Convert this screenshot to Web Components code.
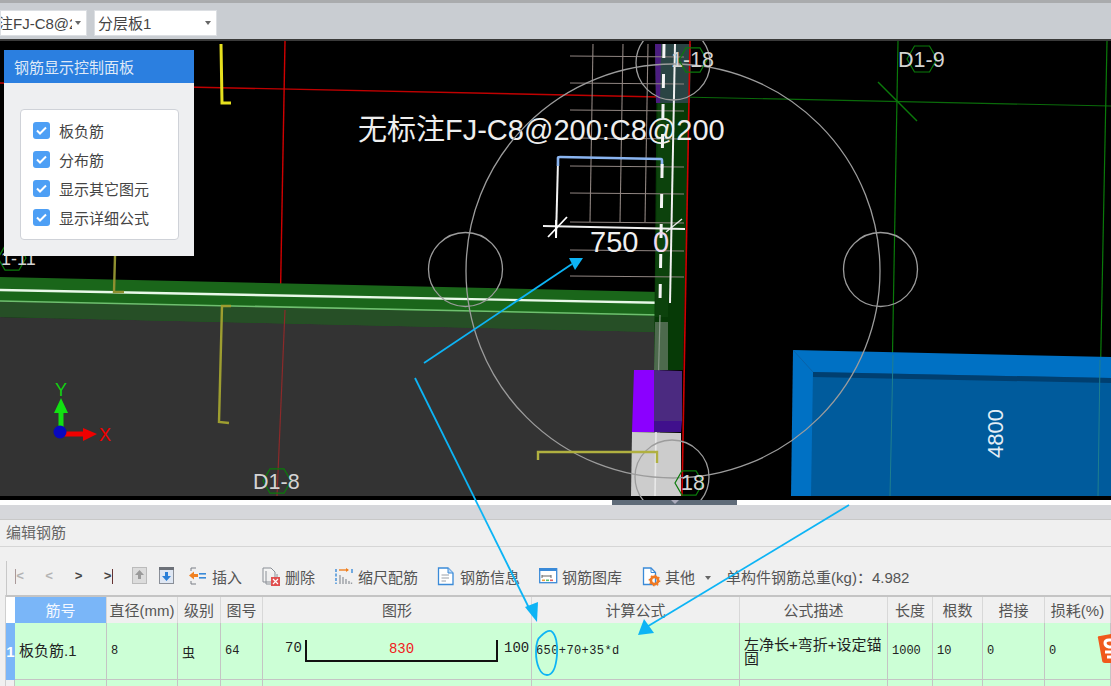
<!DOCTYPE html>
<html lang="zh">
<head>
<meta charset="utf-8">
<title>编辑钢筋</title>
<style>
  html, body { margin: 0; padding: 0; background: #f0f0f0; }
  body { font: 15px "Liberation Sans", "Noto Sans CJK SC", sans-serif; overflow: hidden; }
</style>
</head>
<body>
<cad-app></cad-app>

<script>
const CJK = '"Liberation Sans", "Noto Sans CJK SC", sans-serif';

class ComboBox extends HTMLElement {
    connectedCallback() {
        this.attachShadow({ mode: 'open' });
        this.shadowRoot.innerHTML = `
            <style>
                :host {
                    display: flex;
                    align-items: center;
                    height: 24px;
                    background: white;
                    border: 1px solid #dcdfe3;
                    color: #444;
                    font-size: 15px;
                    box-sizing: content-box;
                    overflow: hidden;
                }
                .label { flex: 1; overflow: hidden; white-space: nowrap; }
                .arrow {
                    width: 0; height: 0; flex: none;
                    border-left: 3.5px solid transparent;
                    border-right: 3.5px solid transparent;
                    border-top: 4px solid #666;
                    margin: 0 5px 0 3px;
                }
            </style>
            <div class="label"><slot></slot></div>
            <div class="arrow"></div>
        `;
    }
}
customElements.define('combo-box', ComboBox);

class TopBar extends HTMLElement {
    connectedCallback() {
        this.attachShadow({ mode: 'open' });
        this.shadowRoot.innerHTML = `
            <style>
                :host {
                    display: flex;
                    align-items: center;
                    gap: 7px;
                    height: 41px;
                    box-sizing: border-box;
                    flex: none;
                    background: #c9cdd2;
                    border-top: 3px solid #a9abad;
                    border-bottom: 2px solid #3a3a3a;
                    padding: 3px 0 0;
                }
                .first { width: 85px; }
                .first span { margin-left: -3px; }
                .second { width: 123px; padding-left: 3px; box-sizing: border-box; height: 26px; }
            </style>
            <combo-box class="first"><span>注FJ-C8@200</span></combo-box>
            <combo-box class="second">分层板1</combo-box>
        `;
    }
}
customElements.define('top-bar', TopBar);

class CheckItem extends HTMLElement {
    connectedCallback() {
        this.attachShadow({ mode: 'open' });
        this.shadowRoot.innerHTML = `
            <style>
                :host {
                    display: flex;
                    align-items: center;
                    gap: 9px;
                    height: 29px;
                    color: #444;
                    font-size: 15px;
                }
                .box {
                    width: 17px; height: 17px;
                    border-radius: 3px;
                    background: #4d9ff5;
                    display: flex; align-items: center; justify-content: center;
                }
            </style>
            <div class="box">
                <svg width="11" height="9" viewBox="0 0 11 9"><path d="M1 4.5 L4 7.5 L10 1.5" fill="none" stroke="#fff" stroke-width="2"/></svg>
            </div>
            <span><slot></slot></span>
        `;
    }
}
customElements.define('check-item', CheckItem);

class RebarPanel extends HTMLElement {
    connectedCallback() {
        this.attachShadow({ mode: 'open' });
        this.shadowRoot.innerHTML = `
            <style>
                :host {
                    position: absolute;
                    left: 4px;
                    top: 9px;
                    width: 190px;
                    height: 206px;
                    display: flex;
                    flex-direction: column;
                    background: #eeeff1;
                }
                .head {
                    height: 33px;
                    flex: none;
                    background: #2b7fe0;
                    color: #dfe9f7;
                    font-size: 15px;
                    display: flex;
                    align-items: center;
                    padding-left: 10px;
                }
                .group {
                    margin: 26px 15px 0 16px;
                    height: 131px;
                    box-sizing: border-box;
                    background: white;
                    border: 1px solid #cfd2d8;
                    border-radius: 4px;
                    padding: 6px 0 0 12px;
                }
            </style>
            <div class="head">钢筋显示控制面板</div>
            <div class="group"><slot></slot></div>
        `;
    }
}
customElements.define('rebar-panel', RebarPanel);

class CadView extends HTMLElement {
    connectedCallback() {
        this.attachShadow({ mode: 'open' });
        const hex = (cx, cy, r) => {
            const pts = [];
            for (let i = 0; i < 6; i++) {
                const a = Math.PI / 3 * i;
                pts.push((cx + r * Math.cos(a)).toFixed(1) + ',' + (cy + r * Math.sin(a)).toFixed(1));
            }
            return `<polygon points="${pts.join(' ')}" fill="none" stroke="#0b7a0b" stroke-width="1.2"/>`;
        };
        const grid = [56, 83, 110, 138, 166, 193, 222, 250, 276].map(y =>
            `<line x1="570" y1="${y}" x2="684" y2="${y + 1}"/>`).join('');
        this.shadowRoot.innerHTML = `
            <style>
                :host {
                    display: block;
                    position: relative;
                    flex: none;
                    height: 459px;
                    background: #000;
                    overflow: hidden;
                }
                svg { display: block; font-family: ${CJK}; }
            </style>
            <svg width="1111" height="459" viewBox="0 41 1111 459">
                <rect x="0" y="41" width="1111" height="459" fill="#000"/>

                <!-- red and green axis lines -->
                <line x1="0" y1="83" x2="660" y2="97" stroke="#c00000" stroke-width="1.4"/>
                <line x1="285" y1="41" x2="280" y2="320" stroke="#d00000" stroke-width="1.4"/>
                <line x1="680" y1="97" x2="1111" y2="106" stroke="#0a6a0a" stroke-width="1.2"/>
                <line x1="898" y1="41" x2="890" y2="496" stroke="#0a7a0a" stroke-width="1.2"/>
                <line x1="1107" y1="41" x2="1098" y2="496" stroke="#0a7a0a" stroke-width="1.2"/>
                <line x1="878" y1="82" x2="917" y2="121" stroke="#0a7a0a" stroke-width="1.4"/>

                <!-- beam and slab -->
                <polygon points="0,317 660,330 660,496 0,496" fill="#333333"/>
                <polygon points="0,277 660,292 660,332 0,317" fill="#1a661a"/>
                <polygon points="0,301 660,316 660,332 0,317" fill="#264f26"/>
                <line x1="0" y1="290" x2="670" y2="303" stroke="#e8f8e8" stroke-width="2.4"/>
                <line x1="0" y1="301" x2="660" y2="315" stroke="#6fbf6f" stroke-width="1.6"/>
                <polygon points="657,44 691,44 683,370 654,370" fill="#063a06"/>
                <polygon points="658,103 672,103 668,317 655,317" fill="#0c420c"/>
                <polygon points="655,44 691,44 690,103 656,103" fill="#2a4444"/>
                <polygon points="655,44 661,44 660,103 656,103" fill="#4c1d80"/>
                <polygon points="655,322 668,322 668,370 654,370" fill="#4d6a4d"/>
                <line x1="660" y1="315" x2="657" y2="432" stroke="#8a9a8a" stroke-width="1.2"/>
                <line x1="285" y1="310" x2="277" y2="496" stroke="#8c2a2a" stroke-width="1.2"/>
                <line x1="690" y1="41" x2="682" y2="496" stroke="#d00000" stroke-width="1.6"/>

                <!-- column -->
                <polygon points="634,370 654,370 654,432 632,432" fill="#8b00ff"/>
                <polygon points="654,370 682,371 682,421 654,421" fill="#4b2a80"/>
                <polygon points="654,421 682,421 681,432 654,432" fill="#40108c"/>
                <polygon points="632,432 681,433 681,496 631,496" fill="#cccccc"/>
                <line x1="656" y1="432" x2="655" y2="496" stroke="#e8e8e8" stroke-width="1.6"/>

                <!-- blue room -->
                <polygon points="793,350 1111,357 1111,496 791,496" fill="#0071c4"/>
                <polygon points="813,372 1111,378 1111,496 811,496" fill="#005b9c"/>
                <polygon points="813,372 1111,378 1111,383 813,377" fill="#003f70"/>
                <line x1="793" y1="350" x2="813" y2="372" stroke="#0a62a8" stroke-width="1"/>
                <line x1="893" y1="355" x2="890" y2="496" stroke="#1f7f8f" stroke-width="1"/>
                <line x1="1100" y1="360" x2="1098" y2="496" stroke="#1f7f8f" stroke-width="1"/>
                <text transform="translate(1003,458) rotate(-90)" font-size="22" fill="#e4eef6">4800</text>

                <!-- rebar grid -->
                <g stroke="#8f8480" stroke-width="1.1">${grid}
                    <line x1="593" y1="44" x2="590" y2="222"/>
                    <line x1="623" y1="44" x2="620" y2="222"/>
                    <line x1="648" y1="44" x2="645" y2="222"/>
                </g>

                <!-- section detail -->
                <path d="M558 161 L556 238" fill="none" stroke="#f4f4f4" stroke-width="2"/>
                <path d="M558 166 V158 Q558 157 560 157 L661 159 Q662 159 662 161 V168" fill="none" stroke="#8ab4f0" stroke-width="2.6"/>
                <line x1="543" y1="226" x2="685" y2="229" stroke="#f0f0f0" stroke-width="1.8"/>
                <line x1="548" y1="237" x2="567" y2="217" stroke="#fff" stroke-width="1.8"/>
                <line x1="556" y1="220" x2="556" y2="238" stroke="#fff" stroke-width="1.8"/>
                <line x1="666" y1="232" x2="682" y2="219" stroke="#e8e8e8" stroke-width="1.4"/>
                <line x1="675" y1="44" x2="670" y2="303" stroke="#f0f0f0" stroke-width="2"/>
                <line x1="664" y1="44" x2="660" y2="303" stroke="#f4f4f4" stroke-width="3" stroke-dasharray="14 16"/>
                <text x="358" y="140" font-size="29" fill="#eeeeee">无标注FJ-C8@200:C8@200</text>
                <text x="590" y="252" font-size="29" fill="#f0f0f0">750</text>
                <text x="653" y="252" font-size="29" fill="#f0d8f0">0</text>

                <!-- lens circles -->
                <g fill="none" stroke="#9c9c9c" stroke-width="1.3">
                    <circle cx="673" cy="271" r="207"/>
                    <circle cx="465.5" cy="269.5" r="37"/>
                    <circle cx="880.5" cy="269.5" r="37"/>
                    <circle cx="673" cy="63" r="37"/>
                    <circle cx="672" cy="477" r="37"/>
                </g>

                <!-- bent bars -->
                <path d="M221 44 L222 103 H231" fill="none" stroke="#e6e01e" stroke-width="3"/>
                <path d="M115 256 L114 292 H124" fill="none" stroke="#8f9030" stroke-width="2.4"/>
                <path d="M231 306 H222 L219 422 L229 423" fill="none" stroke="#9e9e30" stroke-width="2.4"/>
                <path d="M538 460 V452 H657 V463" fill="none" stroke="#b0b040" stroke-width="2.4"/>

                <!-- grid labels -->
                ${hex(922, 59, 15)}${hex(693, 60, 14)}${hex(277, 481, 14)}${hex(689, 483, 14)}${hex(12, 258, 14)}
                <g fill="#d4d4d4" font-size="21.5">
                    <text x="898" y="67">D1-9</text>
                    <text x="671" y="67">1-18</text>
                    <text x="253" y="489">D1-8</text>
                    <text x="681" y="490">18</text>
                    <text x="1" y="265" font-size="18">1-11</text>
                </g>

                <!-- axis gizmo -->
                <line x1="61" y1="428" x2="61" y2="410" stroke="#12e012" stroke-width="5"/>
                <polygon points="61,398 68,413 54,413" fill="#12e012"/>
                <line x1="64" y1="434" x2="85" y2="434" stroke="#f00000" stroke-width="5"/>
                <polygon points="97,434 83,428 83,441" fill="#f00000"/>
                <circle cx="60" cy="432" r="6.5" fill="#0808c0"/>
                <text x="55" y="396" font-size="18" fill="#12d012">Y</text>
                <text x="99" y="441" font-size="18" fill="#f00000">X</text>
            </svg>
            <slot></slot>
        `;
    }
}
customElements.define('cad-view', CadView);

const ICONS = {
    up: `<rect x="0.5" y="0.5" width="14" height="16" fill="#dcdcdc" stroke="#bbb"/><path d="M7.5 3 L3 8 H6 V12 H9 V8 H12 Z" fill="#9a9a9a"/>`,
    down: `<rect x="0.5" y="0.5" width="14" height="16" fill="#dfe7f3" stroke="#8a8f98"/><rect x="0" y="0" width="15" height="3" fill="#6c7078"/><path d="M7.5 14 L3 9 H6 V5 H9 V9 H12 Z" fill="#2a7fd8"/>`,
    insert: `<path d="M2 1 H7 M2 1 V4 M2 14 V17 H7" fill="none" stroke="#7a7f86"/><path d="M0 8.5 L5 4.5 V7 H9 V10 H5 V12.5 Z" fill="#f08020"/><rect x="10" y="6" width="7" height="1.6" fill="#3a8ad8"/><rect x="10" y="10" width="7" height="1.6" fill="#3a8ad8"/>`,
    del: `<path d="M1 1 H9 L13 5 V15 H1 Z M4 4 V17 H15 V7" fill="#f4f4f4" stroke="#8a8f96"/><rect x="9" y="10" width="9" height="9" fill="#e05050"/><path d="M11 12 L16 17 M16 12 L11 17" stroke="#fff" stroke-width="1.2"/>`,
    shrink: `<path d="M1 2 V17" stroke="#3a8ad8" stroke-width="1.4" stroke-dasharray="3 1.5"/><path d="M4 3 H13" stroke="#f08020" stroke-width="1.4"/><path d="M11 1 L14 3 L11 5" fill="#f08020"/><path d="M17 2 V6" stroke="#3a8ad8" stroke-width="1.4"/><path d="M5 17 V8 M8 17 V10 M11 17 V12 M14 17 V14 M16.5 17 V15.5" stroke="#9a9ea4" stroke-width="1.4"/>`,
    info: `<path d="M1.5 1 H11 L16 6 V17.5 H1.5 Z" fill="#fff" stroke="#3a8ad8" stroke-width="1.3"/><path d="M11 1 V6 H16" fill="#bcd8f4" stroke="#3a8ad8"/><path d="M4.5 8 H12 M4.5 11 H12 M4.5 14 H9" stroke="#9aa0a8"/>`,
    lib: `<rect x="0.7" y="1.7" width="17" height="14" fill="#fff" stroke="#3a8ad8" stroke-width="1.3"/><rect x="0" y="1" width="18" height="3" fill="#3a8ad8"/><path d="M3 8 V11 M3 9 H12 M12 8 V11" stroke="#666" fill="none"/><rect x="3" y="12.5" width="3" height="1.6" fill="#f0a040"/><rect x="7" y="12.5" width="3" height="1.6" fill="#60c070"/><rect x="11" y="12.5" width="3" height="1.6" fill="#e06060"/>`,
    other: `<path d="M1.5 1 H9 L13.5 5.5 V17.5 H1.5 Z" fill="#fff" stroke="#3a8ad8" stroke-width="1.3"/><path d="M9 1 V5.5 H13.5" fill="none" stroke="#3a8ad8"/><circle cx="12.5" cy="13.5" r="3.6" fill="none" stroke="#f07820" stroke-width="2.6"/><circle cx="12.5" cy="13.5" r="5.2" fill="none" stroke="#f07820" stroke-width="1.4" stroke-dasharray="1.6 2.4"/>`
};

class ToolBtn extends HTMLElement {
    connectedCallback() {
        this.attachShadow({ mode: 'open' });
        const icon = ICONS[this.getAttribute('icon')];
        this.shadowRoot.innerHTML = `
            <style>
                :host {
                    display: inline-flex;
                    align-items: center;
                    gap: 5px;
                    color: #555;
                    font-size: 15px;
                    white-space: nowrap;
                }
                svg { display: block; flex: none; overflow: visible; }
            </style>
            <svg width="${this.getAttribute('w') || 18}" height="19" viewBox="0 0 ${this.getAttribute('w') || 18} 19">${icon}</svg>
            <slot></slot>
        `;
    }
}
customElements.define('tool-btn', ToolBtn);

class EditBar extends HTMLElement {
    connectedCallback() {
        this.attachShadow({ mode: 'open' });
        this.shadowRoot.innerHTML = `
            <style>
                :host {
                    display: flex;
                    align-items: center;
                    height: 48px;
                    box-sizing: border-box;
                    padding: 11px 0 0 0;
                    margin-left: 6px;
                    flex: none;
                    background: linear-gradient(#c8c8c8, #c8c8c8) 0 14px / 1px 100% no-repeat #f0f0f0;
                    color: #555;
                }
                .nav { display: flex; font: bold 13px "Liberation Mono", monospace; width: 118px; margin-left: -1px; }
                .nav span { width: 30px; text-align: center; color: #444; }
                .nav span.off { color: #b4b4b4; }
                .nav b { font-weight: inherit; border-left: 1px solid #a99; }
                .nav b.end { border-left: 0; border-right: 1px solid #633; }
                .caret {
                    width: 0; height: 0;
                    border-left: 3.5px solid transparent;
                    border-right: 3.5px solid transparent;
                    border-top: 4px solid #666;
                    margin: 2px 15px 0 10px;
                }
                .total { font-size: 15px; color: #555; white-space: nowrap; }
            </style>
            <div class="nav">
                <span class="off"><b>&lt;</b></span><span class="off">&lt;</span><span>&gt;</span><span><b class="end">&gt;</b></span>
            </div>
            <tool-btn icon="up" w="15" style="margin-left:9px"></tool-btn>
            <tool-btn icon="down" w="15" style="margin-left:12px"></tool-btn>
            <tool-btn icon="insert" style="margin-left:15px">插入</tool-btn>
            <tool-btn icon="del" style="margin-left:20px">删除</tool-btn>
            <tool-btn icon="shrink" style="margin-left:20px">缩尺配筋</tool-btn>
            <tool-btn icon="info" style="margin-left:19px">钢筋信息</tool-btn>
            <tool-btn icon="lib" style="margin-left:19px">钢筋图库</tool-btn>
            <tool-btn icon="other" style="margin-left:20px">其他</tool-btn>
            <div class="caret"></div>
            <div class="total">单构件钢筋总重(kg)：4.982</div>
        `;
    }
}
customElements.define('edit-bar', EditBar);

class RebarTable extends HTMLElement {
    connectedCallback() {
        this.attachShadow({ mode: 'open' });
        const heads = ['筋号', '直径(mm)', '级别', '图号', '图形', '计算公式', '公式描述', '长度', '根数', '搭接', '损耗(%)'];
        this.shadowRoot.innerHTML = `
            <style>
                :host {
                    display: grid;
                    grid-template-columns: 9px 92px 71px 43px 42px 269px 208px 148px 45px 50px 62px 66px;
                    grid-template-rows: 26px 57px 20px;
                    margin-left: 6px;
                    flex: 1;
                    position: relative;
                    border-top: 2px solid #c4c4c4;
                    box-shadow: -1px 0 #cfcfcf;
                    background: #f0f0f0;
                    color: #222;
                    overflow: hidden;
                }
                .h {
                    display: flex; align-items: center; justify-content: center;
                    background: #f0f0f0; color: #555; font-size: 15px;
                    border-right: 1px solid #d8d8d8; box-sizing: border-box;
                    white-space: nowrap; overflow: hidden;
                    padding-bottom: 2px;
                }
                .h.sel { background: #7ab6f8; color: #f4f8ff; }
                .corner { background: white; }
                .n {
                    background: #7ab6f8; color: white; font-weight: bold; font-size: 15px;
                    display: flex; align-items: center; justify-content: center;
                }
                .c {
                    background: #ccffd6;
                    border-right: 1px solid #c4c4c4;
                    border-bottom: 1px solid #c4c4c4;
                    box-sizing: border-box;
                    display: flex; align-items: center;
                    padding-left: 4px;
                    font: 12px "Liberation Mono", "Noto Sans CJK SC", monospace;
                    overflow: hidden;
                }
                .c.name { font: 15px ${CJK}; padding-bottom: 3px; }
                .c.desc { font: 15px/14px ${CJK}; white-space: normal; padding-top: 1px; }
                .c.f { letter-spacing: 0.4px; }
                .shape {
                    display: grid;
                    grid-template-columns: 20px 193px auto;
                    align-items: start;
                    font: 14px "Liberation Mono", monospace;
                    padding-left: 22px;
                    width: 100%;
                }
                .bar {
                    height: 22px;
                    border: 2px solid #111; border-top: 0;
                    box-sizing: border-box;
                    color: #f02020;
                    text-align: center;
                    line-height: 18px;
                    font-size: 14px;
                }
                .sub { background: #f0f0f0; border-right: 1px solid #c4c4c4; }
                .logo { position: absolute; left: 1091px; top: 36px; }
            </style>
            <div class="corner"></div>
            ${heads.map((h, i) => `<div class="h ${i === 0 ? 'sel' : ''}">${h}</div>`).join('')}
            <div class="n">1</div>
            <div class="c name">板负筋.1</div>
            <div class="c">8</div>
            <div class="c" style="font-family:'Noto Sans CJK SC';font-size:13px">虫</div>
            <div class="c">64</div>
            <div class="c" style="padding-left:0">
                <div class="shape"><span>70</span><div class="bar">830</div><span style="padding-left:6px">100</span></div>
            </div>
            <div class="c f">650+70+35*d</div>
            <div class="c desc">左净长+弯折+设定锚固</div>
            <div class="c">1000</div>
            <div class="c">10</div>
            <div class="c">0</div>
            <div class="c">0</div>
            <div class="sub"></div>
            ${'<div class="c"></div>'.repeat(11)}
            <svg class="logo" width="20" height="30" viewBox="0 0 20 30">
                <path d="M1 5 Q0 3 3 3 L20 0 V30 H8 Q5 30 5 27 Z" fill="#f05a1c"/>
                <path d="M20 7 H12 Q8 7 8 10 T12 14 H20" fill="none" stroke="#fff" stroke-width="3"/>
                <path d="M8 19 H20 M10 24 H20" stroke="#fff" stroke-width="3"/>
            </svg>
        `;
    }
}
customElements.define('rebar-table', RebarTable);

class EditPane extends HTMLElement {
    connectedCallback() {
        this.attachShadow({ mode: 'open' });
        this.shadowRoot.innerHTML = `
            <style>
                :host {
                    display: flex;
                    flex-direction: column;
                    flex: 1;
                    min-height: 0;
                    background: #f0f0f0;
                    position: relative;
                }
                .split { height: 5px; flex: none; background: white; display: flex; justify-content: flex-start; }
                .handle {
                    height: 5px; width: 125px; margin-left: 612px;
                    background: #5f6b79;
                    display: flex; justify-content: center;
                }
                .handle i {
                    width: 0; height: 0;
                    border-left: 4px solid transparent;
                    border-right: 4px solid transparent;
                    border-top: 4px solid #aab;
                }
                .band { height: 15px; flex: none; box-sizing: border-box; background: #d6d7db; border-bottom: 1px solid #c8c8c8; }
                .title {
                    height: 27px; flex: none; box-sizing: border-box;
                    padding: 0 0 3px 6px;
                    display: flex; align-items: center;
                    color: #666; font-size: 15px;
                    border-bottom: 1px solid #d6d6d6;
                }
            </style>
            <div class="split"><div class="handle"><i></i></div></div>
            <div class="band"></div>
            <div class="title">编辑钢筋</div>
            <edit-bar></edit-bar>
            <rebar-table></rebar-table>
        `;
    }
}
customElements.define('edit-pane', EditPane);

class CadApp extends HTMLElement {
    connectedCallback() {
        this.attachShadow({ mode: 'open' });
        this.shadowRoot.innerHTML = `
            <style>
                :host {
                    display: flex;
                    flex-direction: column;
                    position: relative;
                    width: 1111px;
                    height: 686px;
                    overflow: hidden;
                }
                .marks { position: absolute; left: 0; top: 0; pointer-events: none; }
            </style>
            <top-bar></top-bar>
            <cad-view>
                <rebar-panel>
                    <check-item>板负筋</check-item>
                    <check-item>分布筋</check-item>
                    <check-item>显示其它图元</check-item>
                    <check-item>显示详细公式</check-item>
                </rebar-panel>
            </cad-view>
            <edit-pane></edit-pane>
            <svg class="marks" width="1111" height="686" viewBox="0 0 1111 686">
                <g fill="none" stroke="#0db4f5" stroke-width="1.8">
                    <line x1="424" y1="363" x2="572" y2="264"/>
                    <line x1="415" y1="378" x2="531" y2="612"/>
                    <line x1="849" y1="505" x2="645" y2="628"/>
                    <path d="M541 636 C545 632 548 630 551 631 C556 634 558 645 557 655 C556 667 553 675 547 675 C540 675 536 664 536 652 C536 644 538 638 541 636"/>
                </g>
                <g fill="#0db4f5">
                    <polygon points="583,258 569,258 575,270"/>
                    <polygon points="537,622 525,607 538,602"/>
                    <polygon points="638,635 644,619 654,633"/>
                </g>
            </svg>
        `;
    }
}
customElements.define('cad-app', CadApp);
</script>
</body>
</html>
